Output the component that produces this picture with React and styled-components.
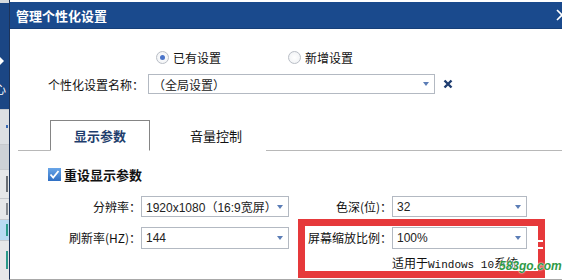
import React from "react";
import styled, { createGlobalStyle } from "styled-components";

const GlobalStyle = createGlobalStyle`
  html, body {
    margin: 0;
    padding: 0;
    background: #fff;
  }
  body {
    font-family: "Noto Sans CJK SC", "Liberation Sans", sans-serif;
    color: #111;
  }
`;

const Page = styled.div`
  position: relative;
  display: flex;
  width: 562px;
  height: 280px;
  overflow: hidden;
  background: #fff;
`;

/* background application peeking out on the left */
const Side = styled.div`
  width: 9px;
  display: flex;
  flex-direction: column;
  background: #e4e6e9;
  overflow: hidden;
`;

const SideCap = styled.div`
  height: 3px;
  background: #d6dade;
`;

const SideNav = styled.div`
  height: 107px;
  background: #1b4684;
  display: flex;
  flex-direction: column;
  padding-top: 54px;
  box-sizing: border-box;
  color: #fff;
  font-size: 12px;
  line-height: 12px;
`;

const Chevron = styled.div`
  width: 0;
  height: 0;
  border-top: 4px solid transparent;
  border-bottom: 4px solid transparent;
  border-left: 4px solid #fff;
`;

const SideGlyph = styled.span`
  margin-top: 18px;
  margin-left: -6px;
`;

const SideCell = styled.div`
  height: ${p => p.h}px;
  background: ${p => p.bg || "#e6e7e9"};
  border-top: 1px solid #c6c9cd;
  display: flex;
  align-items: center;
  justify-content: flex-end;
  padding-right: 1px;
`;

const SideMark = styled.div`
  width: 2px;
  height: ${p => p.h}px;
  background: ${p => p.c};
`;

const Dialog = styled.div`
  flex: 1;
  display: flex;
  flex-direction: column;
  border-left: 1px solid #1d3358;
  border-bottom: 1px solid #a8a8a8;
  background: #fff;
`;

const TitleBar = styled.div`
  margin-top: 2px;
  height: 26px;
  background: #1a4a8d;
  border-bottom: 1px solid #163f78;
  display: flex;
  align-items: center;
  justify-content: space-between;
  padding-left: 6px;
  color: #fff;
  font-size: 13px;
  font-weight: bold;
  overflow: hidden;
`;

const CloseIcon = styled.svg`
  margin-right: -6px;
  flex-shrink: 0;
`;

const RadioRow = styled.div`
  display: flex;
  align-items: center;
  height: 16px;
  margin-top: 20px;
  padding-left: 146px;
  font-size: 12px;
`;

const Option = styled.label`
  display: flex;
  align-items: center;
  gap: 4px;
  margin-right: ${p => p.space || 0}px;
`;

const RadioDot = styled.span`
  width: 11px;
  height: 11px;
  border-radius: 50%;
  border: 1px solid #b9bec6;
  background: radial-gradient(circle, #fff 0%, #eef0f3 100%);
  display: flex;
  align-items: center;
  justify-content: center;
  &::after {
    content: "";
    width: 5px;
    height: 5px;
    border-radius: 50%;
    background: ${p => (p.checked ? "#4a74c9" : "transparent")};
  }
`;

const NameRow = styled.div`
  display: flex;
  align-items: center;
  margin-top: 9px;
  padding-left: 38px;
  font-size: 12px;
`;

const NameLabel = styled.span`
  width: 100px;
`;

const Select = styled.div`
  box-sizing: border-box;
  width: ${p => p.w}px;
  height: ${p => p.h || 21}px;
  border: 1px solid #b3b9c2;
  background: #fff;
  display: flex;
  align-items: center;
  justify-content: space-between;
  padding: 0 5px 0 4px;
  font-family: "Liberation Sans", "Noto Sans CJK SC", sans-serif;
  font-size: 12px;
  color: #222;
`;

const SelectText = styled.span`
  font-family: ${p => (p.cjk ? '"Noto Sans CJK SC", sans-serif' : "inherit")};
`;

const Arrow = styled.span`
  width: 0;
  height: 0;
  border-left: 3.5px solid transparent;
  border-right: 3.5px solid transparent;
  border-top: 4px solid #5b7db6;
`;

const ClearIcon = styled.svg`
  margin-left: 8px;
`;

const TabBar = styled.div`
  display: flex;
  align-items: flex-end;
  height: 31px;
  margin: 25px 0 0 8px;
  padding-left: 32px;
  border-bottom: 1px solid #b8b8b8;
`;

const Tab = styled.div`
  box-sizing: border-box;
  width: ${p => p.w}px;
  height: 31px;
  display: flex;
  align-items: center;
  justify-content: center;
  font-size: 13px;
  font-weight: ${p => (p.active ? 600 : 400)};
  color: ${p => (p.active ? "#1e3d6c" : "#111")};
  background: #fff;
  margin-bottom: -1px;
  border: 1px solid ${p => (p.active ? "#858585" : "transparent")};
  border-bottom: 1px solid #fff;
  padding-left: ${p => (p.active ? 0 : 16)}px;
`;

const CheckRow = styled.div`
  display: flex;
  align-items: center;
  gap: 3px;
  margin-top: 16px;
  padding-left: 38px;
  font-size: 13px;
  font-weight: bold;
  height: 14px;
`;

const CheckBox = styled.span`
  width: 13px;
  height: 13px;
  background: linear-gradient(#6aa6e8, #2f6fc4);
  display: flex;
  align-items: center;
  justify-content: center;
`;

const FieldGrid = styled.div`
  display: grid;
  grid-template-columns: 131px 148px 103px 135px;
  grid-auto-rows: 21px;
  row-gap: 10px;
  margin-top: 15px;
  align-items: center;
  font-size: 12px;
`;

const FieldLabel = styled.span`
  text-align: right;
  white-space: nowrap;
`;

const Note = styled.div`
  margin-top: 8px;
  padding-left: 382px;
  font-size: 12px;
  height: 14px;
  line-height: 14px;
  white-space: nowrap;
`;

const Mono = styled.span`
  font-family: "Liberation Mono", monospace;
  font-size: 11px;
`;

/* red annotation drawn over the screenshot */
const Highlight = styled.div`
  position: absolute;
  left: 298px;
  top: 219px;
  width: 247px;
  height: 59px;
  box-sizing: border-box;
  border: 7px solid #e6393b;
`;

const Logo = styled.div`
  position: absolute;
  left: 533px;
  top: 240px;
  display: flex;
  flex-direction: column;
  gap: 5px;
  & > span {
    width: 10px;
    height: 2px;
    background: #fff;
  }
`;

const Watermark = styled.div`
  position: absolute;
  left: 499px;
  top: 259px;
  font-family: "Liberation Sans", sans-serif;
  font-size: 12px;
  font-weight: bold;
  font-style: italic;
  color: #2f9a46;
  text-shadow: 0 0 2px #fff, 0 0 1px #fff;
`;

const fields = [
  { l1: "分辨率：", v1: "1920x1080（16:9宽屏）", l2: "色深(位)：", v2: "32", h: 21 },
  { l1: "刷新率(HZ)：", v1: "144", l2: "屏幕缩放比例：", v2: "100%", h: 22 },
];

export default function App() {
  return (
    <>
      <GlobalStyle />
      <Page>
        <Side>
          <SideCap />
          <SideNav>
            <Chevron />
            <SideGlyph>心</SideGlyph>
          </SideNav>
          <SideCell h={35} bg="#dcdfe3">
            <SideMark h={3} c="#3a6bb5" />
          </SideCell>
          <SideCell h={25} bg="#cdd1d6" />
          <SideCell h={28}>
            <SideMark h={16} c="#6b6f75" />
          </SideCell>
          <SideCell h={21}>
            <SideMark h={12} c="#85898f" />
          </SideCell>
          <SideCell h={20} bg="#b9daf3">
            <SideMark h={12} c="#2b9a8a" />
          </SideCell>
          <SideCell h={40}>
            <SideMark h={18} c="#2b9a8a" />
          </SideCell>
        </Side>

        <Dialog>
          <TitleBar>
            管理个性化设置
            <CloseIcon width="12" height="12" viewBox="0 0 12 12">
              <path d="M1 1 L11 11 M11 1 L1 11" stroke="#fff" strokeWidth="1.6" />
            </CloseIcon>
          </TitleBar>

          <RadioRow>
            <Option space={67}>
              <RadioDot checked />
              已有设置
            </Option>
            <Option>
              <RadioDot />
              新增设置
            </Option>
          </RadioRow>

          <NameRow>
            <NameLabel>个性化设置名称：</NameLabel>
            <Select w={287} h={20}>
              <SelectText cjk>（全局设置）</SelectText>
              <Arrow />
            </Select>
            <ClearIcon width="10" height="10" viewBox="0 0 10 10">
              <path d="M1.5 1.5 L8.5 8.5 M8.5 1.5 L1.5 8.5" stroke="#1f3d70" strokeWidth="2.4" />
            </ClearIcon>
          </NameRow>

          <TabBar>
            <Tab active w={100}>显示参数</Tab>
            <Tab w={116}>音量控制</Tab>
          </TabBar>

          <CheckRow>
            <CheckBox>
              <svg width="11" height="11" viewBox="0 0 11 11">
                <path d="M1.5 5.5 L4.2 8.5 L9.5 2" stroke="#fff" strokeWidth="1.8" fill="none" />
              </svg>
            </CheckBox>
            重设显示参数
          </CheckRow>

          <FieldGrid>
            {fields.map(f => (
              <React.Fragment key={f.l1}>
                <FieldLabel>{f.l1}</FieldLabel>
                <Select w={148} h={f.h}>
                  <SelectText>{f.v1}</SelectText>
                  <Arrow />
                </Select>
                <FieldLabel>{f.l2}</FieldLabel>
                <Select w={135} h={f.h}>
                  <SelectText>{f.v2}</SelectText>
                  <Arrow />
                </Select>
              </React.Fragment>
            ))}
          </FieldGrid>

          <Note>
            适用于<Mono>Windows 10</Mono>系统
          </Note>
        </Dialog>

        <Highlight />
        <Logo>
          <span />
          <span />
        </Logo>
        <Watermark>583go.com</Watermark>
      </Page>
    </>
  );
}
